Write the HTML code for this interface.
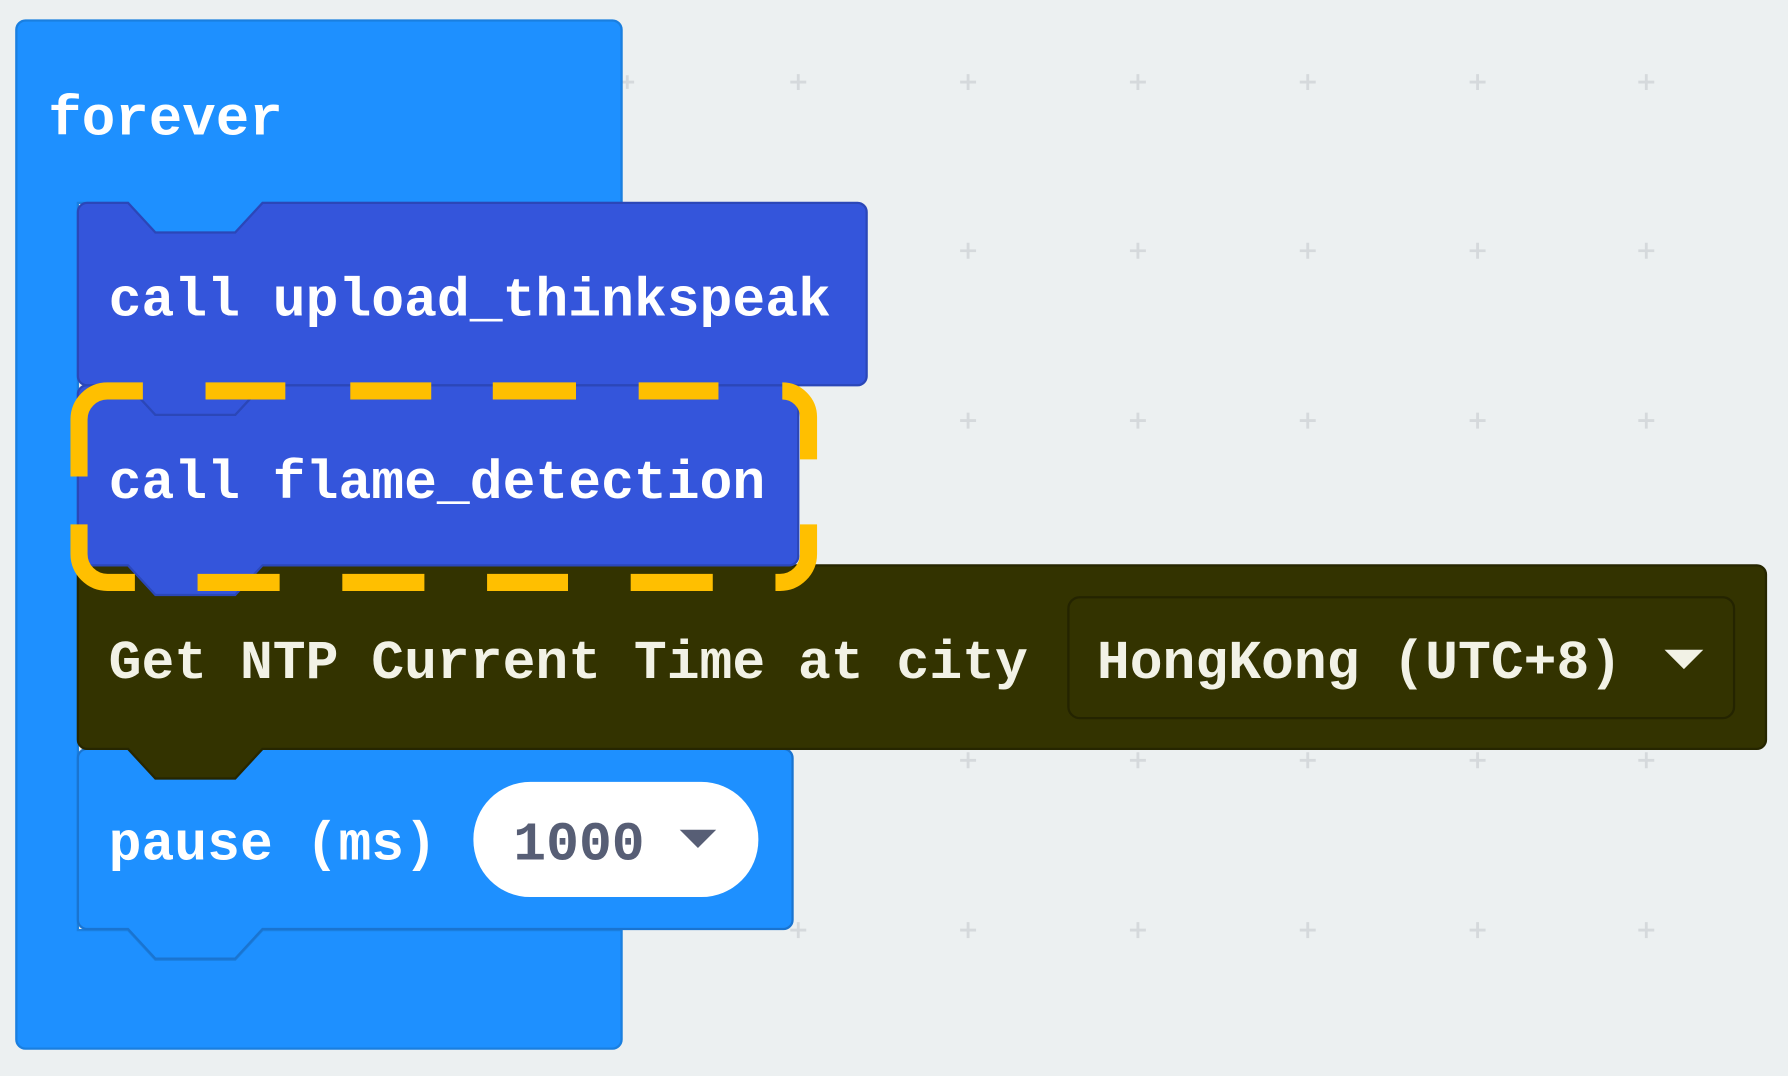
<!DOCTYPE html>
<html><head><style>
html,body{margin:0;padding:0;background:#ecf0f1;}
svg{display:block}
text{font-family:"Liberation Mono",monospace;font-weight:bold;font-size:48px;}
</style></head><body>
<svg width="1788" height="1076" viewBox="0 0 1568 944" xmlns="http://www.w3.org/2000/svg">
<rect width="1568" height="944" fill="#ecf0f1"/>
<g stroke="#d5d9dc" stroke-width="2.5" fill="none">
<path d="M544 72h12M550 66v12 M693 72h14M700 65v14 M842 72h14M849 65v14 M991 72h14M998 65v14 M1140 72h14M1147 65v14 M1289 72h14M1296 65v14 M1437 72h14M1444 65v14
M842 220h14M849 213v14 M991 220h14M998 213v14 M1140 220h14M1147 213v14 M1289 220h14M1296 213v14 M1437 220h14M1444 213v14
M842 369h14M849 362v14 M991 369h14M998 362v14 M1140 369h14M1147 362v14 M1289 369h14M1296 362v14 M1437 369h14M1444 362v14
M842 667h14M849 660v14 M991 667h14M998 660v14 M1140 667h14M1147 660v14 M1289 667h14M1296 660v14 M1437 667h14M1444 660v14
M693 816h14M700 809v14 M842 816h14M849 809v14 M991 816h14M998 809v14 M1140 816h14M1147 809v14 M1289 816h14M1296 809v14 M1437 816h14M1444 809v14"/>
</g>
<!-- forever -->
<path d="M22 18H537a8 8 0 0 1 8 8V178H230l-24 26h-70l-24-26H68V816H112l24 26h70l24-26H545V912a8 8 0 0 1-8 8H22a8 8 0 0 1-8-8V26a8 8 0 0 1 8-8z" fill="#1e90ff" stroke="#1a7fe0" stroke-width="2"/>
<text x="42" y="118" fill="#fff" style="font-size:49px">forever</text>
<!-- pause -->
<path d="M76 657H112l24 26h70l24-26H687a8 8 0 0 1 8 8V807a8 8 0 0 1-8 8H230l-24 26h-70l-24-26H76a8 8 0 0 1-8-8V665a8 8 0 0 1 8-8z" fill="#1e90ff" stroke="#1a74d0" stroke-width="2"/>
<text x="95" y="754" fill="#fff">pause (ms)</text>
<rect x="415" y="686" width="250" height="101" rx="50" fill="#fff"/>
<text x="450" y="754" fill="#575e75">1000</text>
<path d="M596 728h32l-16 16z" fill="#575e75"/>
<!-- NTP -->
<path d="M76 496H112l24 26h70l24-26H1541a8 8 0 0 1 8 8V649a8 8 0 0 1-8 8H230l-24 26h-70l-24-26H76a8 8 0 0 1-8-8V504a8 8 0 0 1 8-8z" fill="#333300" stroke="#262600" stroke-width="2"/>
<text x="95" y="595" fill="#f2f2e6">Get NTP Current Time at city</text>
<rect x="937" y="524" width="584" height="106" rx="10" fill="#333300" stroke="#242400" stroke-width="2"/>
<text x="962" y="595" fill="#f2f2e6">HongKong (UTC+8)</text>
<path d="M1460 570h34l-17 17z" fill="#f2f2e6"/>
<!-- flame -->
<path d="M76 338H112l24 26h70l24-26H692a8 8 0 0 1 8 8V488a8 8 0 0 1-8 8H230l-24 26h-70l-24-26H76a8 8 0 0 1-8-8V346a8 8 0 0 1 8-8z" fill="#3455db" stroke="#2b47b8" stroke-width="2"/>
<text x="95" y="437" fill="#fff">call flame_detection</text>
<!-- upload -->
<path d="M76 178H112l24 26h70l24-26H752a8 8 0 0 1 8 8V330a8 8 0 0 1-8 8H230l-24 26h-70l-24-26H76a8 8 0 0 1-8-8V186a8 8 0 0 1 8-8z" fill="#3455db" stroke="#2b47b8" stroke-width="2"/>
<text x="95" y="277" fill="#fff">call upload_thinkspeak</text>
<!-- dashed highlight -->
<g fill="none" stroke="#ffbf00" stroke-width="15">
<path d="M69 418V368a25 25 0 0 1 25-25H125"/>
<path d="M180 343H250M307 343H378M432 343H505M560 343H630"/>
<path d="M686 343a23 23 0 0 1 23 23V403"/>
<path d="M709 460V486a25 25 0 0 1-25 25H680"/>
<path d="M625 511H553M498 511H427M372 511H300M245 511H173"/>
<path d="M118 511H94a25 25 0 0 1-25-25V460"/>
</g>
</svg>
</body></html>
